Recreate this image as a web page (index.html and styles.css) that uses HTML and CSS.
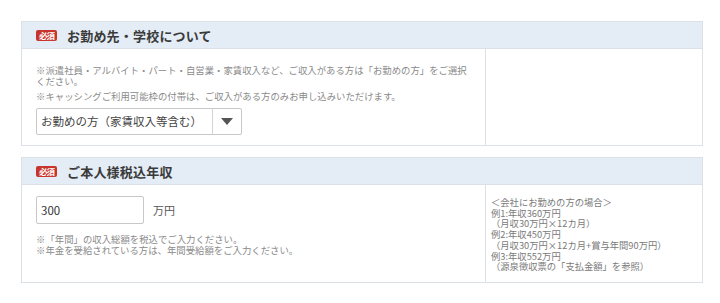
FILE: index.html
```html
<!DOCTYPE html>
<html lang="ja">
<head>
<meta charset="UTF-8">
<meta name="viewport" content="width=device-width, initial-scale=1.0">
<title>お申し込み</title>
<link rel="stylesheet" href="styles.css">
</head>
<body>

<div class="form-wrap">
    <!-- お勤め先 -->
    <div class="card">
        <div class="card-head">
            <span class="badge">必須</span>
            <p class="card-title">お勤め先・学校について</p>
        </div>
        <div class="card-body">
            <div class="main-col">
                <p class="note">※派遣社員・アルバイト・パート・自営業・家賃収入など、ご収入がある方は「お勤めの方」をご選択ください。</p>
                <p class="note note-gap">※キャッシングご利用可能枠の付帯は、ご収入がある方のみお申し込みいただけます。</p>
                <div class="select-box">
                    <span class="select-text">お勤めの方（家賃収入等含む）</span>
                    <span class="select-arrow"></span>
                </div>
            </div>
            <div class="side-col"></div>
        </div>
    </div>

    <!-- 年収 -->
    <div class="card">
        <div class="card-head">
            <span class="badge">必須</span>
            <p class="card-title">ご本人様税込年収</p>
        </div>
        <div class="card-body">
            <div class="main-col income-col">
                <div class="income-row">
                    <input type="text" class="income-input" value="300">
                    <span class="unit">万円</span>
                </div>
                <p class="note">※「年間」の収入総額を税込でご入力ください。</p>
                <p class="note">※年金を受給されている方は、年間受給額をご入力ください。</p>
            </div>
            <div class="side-col examples">
                <p>＜会社にお勤めの方の場合＞</p>
                <p>例1:年収360万円</p>
                <p>（月収30万円×12カ月）</p>
                <p>例2:年収450万円</p>
                <p>（月収30万円×12カ月+賞与年間90万円）</p>
                <p>例3:年収552万円</p>
                <p>（源泉徴収票の「支払金額」を参照）</p>
            </div>
        </div>
    </div>
</div>

</body>
</html>
```

FILE: styles.css
```css
body {
    margin: 0;
    background: #ffffff;
    font-family: "Noto Sans CJK JP", "Noto Sans", sans-serif;
    color: #333;
}
p {
    margin: 0;
}
.form-wrap {
    width: 682px;
    padding: 21px 0 0 21px;
}
.card {
    border: 1px solid #dce1e7;
    margin-bottom: 11px;
}
.card-head {
    height: 26px;
    display: flex;
    align-items: center;
    padding-left: 14px;
    background: #e4ecf6;
    border-bottom: 1px solid #dce1e7;
}
.badge {
    width: 21px;
    height: 11px;
    line-height: 11px;
    background: #c7342c;
    color: #fff;
    border-radius: 2px;
    font-size: 8.5px;
    font-weight: bold;
    text-align: center;
    letter-spacing: -1px;
}
.card-title {
    margin-left: 10px;
    font-size: 13px;
    font-weight: bold;
    color: #3a3a3a;
    letter-spacing: 0.2px;
}
.card-body {
    display: grid;
    grid-template-columns: 1fr 217px;
}
.main-col {
    padding: 16px 15px 10px 14px;
}
.side-col {
    border-left: 1px solid #dce1e7;
}
.note {
    font-size: 9.4px;
    line-height: 11px;
    color: #8a8a8a;
}
.note-gap {
    margin-top: 4px;
}
.select-box {
    margin-top: 6px;
    width: 204px;
    height: 25px;
    display: flex;
    border: 1px solid #c8c8c8;
    border-radius: 2px;
}
.select-text {
    flex: 1;
    padding-left: 4px;
    font-size: 11.5px;
    line-height: 25px;
    color: #444;
}
.select-arrow {
    width: 28px;
    border-left: 1px solid #d4d4d4;
    display: flex;
    align-items: center;
    justify-content: center;
}
.select-arrow::after {
    content: "";
    border-left: 6px solid transparent;
    border-right: 6px solid transparent;
    border-top: 7px solid #555;
}
.income-col {
    padding: 11px 15px 27px 14px;
}
.income-col .note {
    line-height: 10.5px;
}
.income-row {
    display: flex;
    align-items: center;
    margin-bottom: 10px;
}
.income-input {
    width: 108px;
    height: 28px;
    padding: 0 4px;
    box-sizing: border-box;
    border: 1px solid #c8c8c8;
    border-radius: 2px;
    font-family: "Noto Sans CJK JP", "Noto Sans", sans-serif;
    font-size: 11.5px;
    color: #333;
    margin: 0;
}
.unit {
    margin-left: 9px;
    font-size: 11px;
    color: #555;
}
.examples {
    padding: 12px 0 0 5px;
}
.examples p {
    font-size: 9.3px;
    line-height: 10.7px;
    color: #7a7a7a;
}
```
